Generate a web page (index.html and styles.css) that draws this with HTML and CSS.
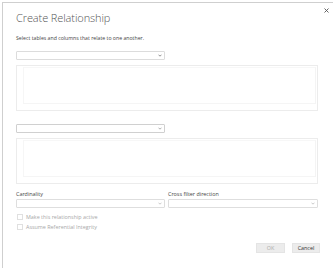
FILE: index.html
```html
<!DOCTYPE html>
<html>
<head>
<meta charset="utf-8">
<link rel="stylesheet" href="styles.css">
</head>
<body>
<div class="dialog">
  <button class="close" aria-label="Close">
    <svg width="5" height="5" viewBox="0 0 5 5"><path d="M0.5 0.5L4.5 4.5M4.5 0.5L0.5 4.5" stroke="#555" stroke-width="0.9"/></svg>
  </button>
  <h1 class="title">Create Relationship</h1>
  <p class="subtitle">Select tables and columns that relate to one another.</p>

  <div class="select half first"><span class="chev"><svg width="4" height="3" viewBox="0 0 4 3"><path d="M0.5 0.7L2 2.2L3.5 0.7" fill="none" stroke="#777" stroke-width="0.8"/></svg></span></div>
  <div class="grid"><div class="grid-inner"></div></div>

  <div class="select half second"><span class="chev"><svg width="4" height="3" viewBox="0 0 4 3"><path d="M0.5 0.7L2 2.2L3.5 0.7" fill="none" stroke="#999" stroke-width="0.8"/></svg></span></div>
  <div class="grid"><div class="grid-inner"></div></div>

  <div class="options">
    <div class="field">
      <label class="label">Cardinality</label>
      <div class="select"><span class="chev"><svg width="4" height="3" viewBox="0 0 4 3"><path d="M0.5 0.7L2 2.2L3.5 0.7" fill="none" stroke="#bbb" stroke-width="0.8"/></svg></span></div>
    </div>
    <div class="field">
      <label class="label">Cross filter direction</label>
      <div class="select"><span class="chev"><svg width="4" height="3" viewBox="0 0 4 3"><path d="M0.5 0.7L2 2.2L3.5 0.7" fill="none" stroke="#bbb" stroke-width="0.8"/></svg></span></div>
    </div>
  </div>

  <div class="checks">
    <div class="check"><span class="box"></span><span>Make this relationship active</span></div>
    <div class="check"><span class="box"></span><span>Assume Referential Integrity</span></div>
  </div>

  <div class="buttons">
    <button class="btn ok">OK</button>
    <button class="btn cancel">Cancel</button>
  </div>
</div>
</body>
</html>
```
FILE: styles.css
```css
* { box-sizing: border-box; }
html, body { margin: 0; padding: 0; background: #fff; }
body { font-family: "Open Sans", "Noto Sans", sans-serif; color: #444; overflow: hidden; }

.dialog {
  margin: 2px 0 0 2px;
  border-top: 1px solid #cfcfcf;
  border-left: 1px solid #cfcfcf;
  height: 266px;
  padding: 7px 15px 0 13px;
  display: flex;
  flex-direction: column;
  position: relative;
}

.close {
  position: absolute;
  top: 5px;
  right: 4px;
  border: 0;
  background: none;
  padding: 0;
  width: 5px;
  height: 5px;
  display: flex;
}

.title {
  margin: 0;
  font-size: 11px;
  line-height: 16px;
  font-weight: 300;
  color: #555;
  letter-spacing: -0.1px;
}

.subtitle {
  margin: 8px 0 0 0;
  font-size: 5.2px;
  line-height: 8px;
  color: #444;
}

.select {
  height: 9px;
  border: 1px solid #dcdcdc;
  border-radius: 1px;
  display: flex;
  justify-content: flex-end;
  align-items: center;
  padding-right: 2px;
  background: #fff;
}
.chev { display: flex; }

.half { width: 149px; }
.first { margin-top: 9px; }
.second { margin-top: 13px; border-color: #d0d0d0; }

.grid {
  margin-top: 5px;
  height: 46px;
  border: 1px solid #ececec;
  padding: 1px 1px 6px 6px;
}
.grid-inner {
  height: 100%;
  border-left: 1px solid #f6f6f6;
  border-right: 1px solid #f4f4f4;
  border-top: 1px solid #f7f7f7;
  border-bottom: 1px solid #f5f5f5;
}

.options {
  margin-top: 7px;
  display: grid;
  grid-template-columns: 149px 150px;
  column-gap: 3px;
}
.field { display: flex; flex-direction: column; gap: 2px; }
.label { font-size: 5.4px; line-height: 6px; color: #444; }
.options .select { border-color: #dedede; }

.checks {
  margin-top: 6px;
  display: flex;
  flex-direction: column;
  gap: 4px;
  padding-left: 1px;
}
.check {
  display: flex;
  align-items: center;
  gap: 3px;
  font-size: 5.4px;
  line-height: 6px;
  color: #a8a8a8;
}
.box {
  width: 6px;
  height: 6px;
  border: 1px solid #e0e0e0;
  background: #fff;
}

.buttons {
  margin-top: 13px;
  display: flex;
  justify-content: flex-end;
  gap: 7px;
  margin-right: -2px;
}
.btn {
  height: 10px;
  border: 1px solid #e4e4e4;
  background: #ececec;
  font-family: inherit;
  font-size: 5.4px;
  line-height: 8px;
  padding: 0;
  color: #333;
}
.ok { width: 29px; color: #aaa; }
.cancel { width: 28px; }
```
